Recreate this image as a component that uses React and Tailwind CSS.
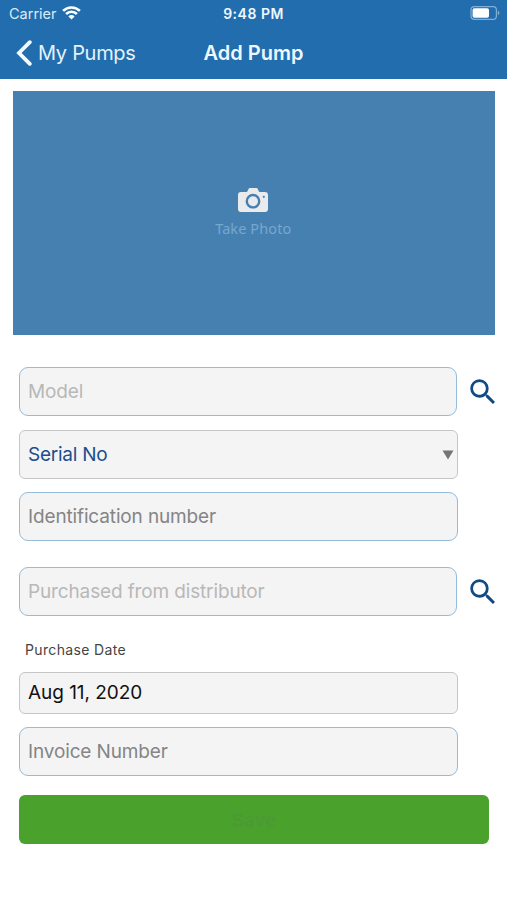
import React, { useState } from 'react';
import { MdSearch } from 'react-icons/md';

const StatusBar = () => (
  <div className="relative flex h-[27px] items-center justify-between pl-[9px] pr-[7px]">
    <div className="flex items-center gap-[5px]">
      <span className="text-[14.5px] leading-[27px] text-[#d9ecfa]">Carrier</span>
      <svg className="-mt-[2px]" width="19" height="14" viewBox="0 0 19 14" fill="none" stroke="#fff" strokeWidth="2.6">
        <path d="M1.1 4.9a12 12 0 0 1 16.8 0" />
        <path d="M4.1 8a7.7 7.7 0 0 1 10.8 0" />
        <path d="M9.5 13.6 6.4 10.4a4.4 4.4 0 0 1 6.2 0z" fill="#fff" stroke="none" />
      </svg>
    </div>
    <span className="absolute left-0 w-full text-center text-[14px] font-semibold leading-[27px] tracking-[0.5px] text-[#eef8ff]">
      9:48 PM
    </span>
    <svg className="-mt-[1px]" width="30" height="14" viewBox="0 0 30 14" fill="none">
      <rect x="1" y="0.7" width="25.4" height="12.6" rx="3.4" stroke="#84afd4" strokeWidth="1.2" />
      <rect x="2.6" y="2.3" width="16.4" height="9.4" rx="1.8" fill="#fff" />
      <path d="M27.8 4.8c2.1.7 2.1 3.7 0 4.4z" fill="#84afd4" />
    </svg>
  </div>
);

const NavBar = () => (
  <div className="relative flex h-[52px] items-center">
    <button className="ml-4 flex items-center gap-[6px] text-[20px] leading-[52px] tracking-[-0.3px] text-[#e3f2fd]">
      <svg width="16" height="26" viewBox="0 0 16 26" fill="none" stroke="#f3faff" strokeWidth="3.8" strokeLinecap="round" strokeLinejoin="miter">
        <path d="M13.8 2.2 3 13l10.8 10.8" />
      </svg>
      My Pumps
    </button>
    <h1 className="pointer-events-none absolute left-0 w-full text-center text-[20px] font-semibold leading-[52px] text-[#eef8ff]">
      Add Pump
    </h1>
  </div>
);

const CameraIcon = () => (
  <svg className="-ml-[1px]" width="30" height="24" viewBox="0 0 30 24">
    <path
      fill="#e9ebec"
      fillRule="evenodd"
      d="M3 4h5.2c.7 0 1-.3 1.4-1l.7-1.5C10.8.4 11.3 0 12.3 0h5.7c1 0 1.5.4 2 1.5l.7 1.5c.4.7.7 1 1.4 1H27a3 3 0 0 1 3 3v14a3 3 0 0 1-3 3H3a3 3 0 0 1-3-3V7a3 3 0 0 1 3-3zM15 5.8a7.4 7.4 0 1 0 0 14.8 7.4 7.4 0 0 0 0-14.8zM15 8.2a5 5 0 1 1 0 10 5 5 0 0 1 0-10zM25.8 7.7a1.1 1.1 0 1 0 0 2.2 1.1 1.1 0 0 0 0-2.2z"
    />
  </svg>
);

const inputBase = 'block h-[49px] rounded-[9px] border border-[#94bbd9] bg-[#f4f4f4] pl-2 text-[19px] tracking-[-0.14px] text-[#222] outline-none';

const SearchField = ({ placeholder, value, onChange }) => (
  <div className="flex items-center">
    <input
      className={`${inputBase} w-[438px] placeholder:text-[#b8b8b8]`}
      placeholder={placeholder}
      value={value}
      onChange={onChange}
    />
    <button className="ml-[9px] pt-[1px]" aria-label="Search">
      <MdSearch size={34} color="#0f4a85" />
    </button>
  </div>
);

const App = () => {
  const [form, setForm] = useState({ model: '', idNumber: '', distributor: '', invoice: '' });

  const update = (key) => (e) => setForm({ ...form, [key]: e.target.value });

  return (
    <div className="h-[900px] w-[507px] overflow-hidden bg-white font-['Inter','Liberation_Sans',sans-serif]">
      <header className="h-[79px] bg-[#226dad]">
        <StatusBar />
        <NavBar />
      </header>

      {/* Photo placeholder */}
      <button className="ml-[13px] mt-[12px] flex h-[244.4px] w-[481.5px] flex-col items-center bg-[#4680b1] pt-[97px]">
        <CameraIcon />
        <span className="-ml-[1px] mt-[6px] font-['Noto_Sans',sans-serif] text-[14.5px] leading-[21px] tracking-[0.1px] text-[#74a8d0]">Take Photo</span>
      </button>

      <main className="pl-[19px] pt-[31.6px]">
        <SearchField placeholder="Model" value={form.model} onChange={update('model')} />

        {/* Serial number picker */}
        <button className="mt-[14px] flex h-[49px] w-[439px] items-center justify-between rounded-[6px] border border-[#c6c6c6] bg-[#f4f4f4] pl-2 pr-[3px] text-[19px] tracking-[-0.25px] text-[#1c4d8c]">
          <span className="pt-[1px]">Serial No</span>
          <svg className="mt-[2px]" width="12" height="10" viewBox="0 0 12 10">
            <path d="M.5.5h11L6 9.5z" fill="#757575" />
          </svg>
        </button>

        <input
          className={`${inputBase} mt-[13px] w-[439px] placeholder:text-[#858585]`}
          placeholder="Identification number"
          value={form.idNumber}
          onChange={update('idNumber')}
        />

        <div className="mt-[26px]">
          <SearchField placeholder="Purchased from distributor" value={form.distributor} onChange={update('distributor')} />
        </div>

        <p className="ml-[6px] mt-[24px] text-[14px] leading-[20px] tracking-[0.35px] text-[#444]">Purchase Date</p>
        <button className="mt-[12px] flex h-[42px] w-[439px] items-center rounded-[6px] border border-[#c6c6c6] bg-[#f4f4f4] pl-2 pt-[1px] text-[19px] tracking-[-0.05px] text-[#111]">
          Aug 11, 2020
        </button>

        <input
          className={`${inputBase} mt-[13px] w-[439px] placeholder:text-[#858585]`}
          placeholder="Invoice Number"
          value={form.invoice}
          onChange={update('invoice')}
        />

        <button disabled className="mt-[19px] h-[49px] w-[470px] rounded-[6px] bg-[#4aa12c] pt-[3px] text-[19px] font-semibold text-[#4b9a35]">
          Save
        </button>
      </main>
    </div>
  );
};

export default App;
